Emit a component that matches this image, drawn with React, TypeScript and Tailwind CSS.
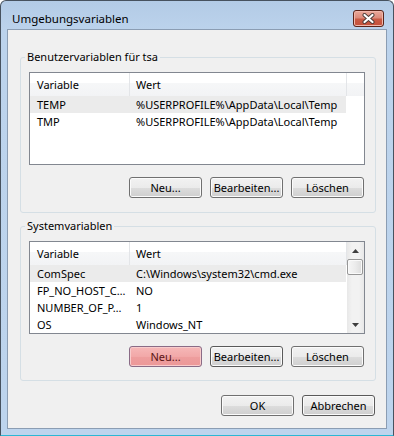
import React from "react";

type BtnKind = "normal" | "hot" | "focus";

function Btn({ label, kind = "normal" }: { label: string; kind?: BtnKind }) {
  const base =
    "w-[73px] h-[21px] rounded-[3px] border flex items-center justify-center text-[11px] leading-[16px] shrink-0 whitespace-nowrap";
  if (kind === "hot") {
    return (
      <div
        className={`${base} border-[#8a6b86] bg-[linear-gradient(to_bottom,#f6b8b8_0%,#f2a8a8_50%,#ee9e9e_50%,#ec9898_100%)] shadow-[inset_0_0_0_1px_#f8cccc] text-[#5a1414]`}
      >
        {label}
      </div>
    );
  }
  if (kind === "focus") {
    return (
      <div
        className={`${base} border-[#5a5a5a] bg-[linear-gradient(to_bottom,#f2f2f2_0%,#ebebeb_50%,#dddddd_50%,#cfcfcf_100%)] shadow-[inset_0_0_0_1px_#fbfbfb] text-black`}
      >
        {label}
      </div>
    );
  }
  return (
    <div
      className={`${base} border-[#707070] bg-[linear-gradient(to_bottom,#f2f2f2_0%,#ebebeb_50%,#dddddd_50%,#cfcfcf_100%)] shadow-[inset_0_0_0_1px_#fbfbfb] text-black`}
    >
      {label}
    </div>
  );
}

function CloseBtn() {
  return (
    <div className="mt-[9px] mr-[9px] w-[31px] h-[17px] rounded-[3px] border border-[#5a2419] bg-[linear-gradient(to_bottom,#eaa99b_0%,#dc8b7b_45%,#c95a44_55%,#c4503a_100%)] shadow-[inset_0_0_0_1px_#f0b7ab] flex items-center justify-center">
      <svg width="15" height="11" viewBox="0 0 15 11">
        <path d="M3.5 2 L11.5 9 M11.5 2 L3.5 9" stroke="#4a3a36" strokeWidth="4" strokeLinecap="round" fill="none" />
        <path d="M3.5 2 L11.5 9 M11.5 2 L3.5 9" stroke="#ffffff" strokeWidth="2.2" strokeLinecap="round" fill="none" />
      </svg>
    </div>
  );
}

function Arrow({ up }: { up?: boolean }) {
  return (
    <svg width="7" height="4" viewBox="0 0 7 4">
      {up ? <path d="M0 4 L3.5 0 L7 4 Z" fill="#3e3e3e" /> : <path d="M0 0 L7 0 L3.5 4 Z" fill="#3e3e3e" />}
    </svg>
  );
}

function Scrollbar() {
  return (
    <div className="w-[17px] shrink-0 flex flex-col bg-[linear-gradient(to_right,#e8e8e8_0%,#f2f2f2_30%,#f2f2f2_70%,#e8e8e8_100%)]">
      <div className="h-[17px] flex items-center justify-center shrink-0">
        <Arrow up />
      </div>
      <div className="mr-[1px] h-[16px] rounded-[2px] border border-[#979797] bg-[linear-gradient(to_right,#f6f6f6_0%,#ececec_50%,#dcdcdc_100%)] shadow-[inset_0_0_0_1px_#fafafa]" />
      <div className="flex-1" />
      <div className="h-[17px] flex items-center justify-center shrink-0">
        <Arrow />
      </div>
    </div>
  );
}

type Row = { name: string; value: string; hl?: boolean };

function ListView({ rows, scroll }: { rows: Row[]; scroll?: boolean }) {
  return (
    <div className="w-[336px] h-[93px] border border-[#828790] bg-white flex overflow-hidden">
      <div className="flex-1 min-w-0 flex flex-col">
        <div className="h-[23px] shrink-0 flex bg-[linear-gradient(to_bottom,#ffffff_0%,#ffffff_42%,#f6f7f8_45%,#f2f3f5_100%)]">
          <div className="w-[100px] shrink-0 border-r border-[#e3e5e8] pl-[7px] flex items-center">Variable</div>
          <div className="w-[217px] shrink-0 border-r border-[#e3e5e8] pl-[6px] flex items-center">Wert</div>
          <div className="flex-1" />
        </div>
        {rows.map((r) => (
          <div
            key={r.name}
            className={`h-[17px] shrink-0 w-[316px] flex items-center whitespace-nowrap ${r.hl ? "bg-[#ebebeb]" : ""}`}
          >
            <div className="w-[100px] shrink-0 pl-[7px] overflow-hidden">{r.name}</div>
            <div className="pl-[6px]">{r.value}</div>
          </div>
        ))}
      </div>
      {scroll && <Scrollbar />}
    </div>
  );
}

function Group({
  title,
  children,
  pb,
}: {
  title: string;
  children: React.ReactNode;
  pb: string;
}) {
  return (
    <fieldset className={`w-[356px] rounded-[3px] border border-[#d5dfe5] ${pb}`}>
      <legend className="ml-[4px] px-[2px] text-[11px] leading-[16px] text-black">{title}</legend>
      {children}
    </fieldset>
  );
}

export default function App() {
  const userRows: Row[] = [
    { name: "TEMP", value: "%USERPROFILE%\\AppData\\Local\\Temp", hl: true },
    { name: "TMP", value: "%USERPROFILE%\\AppData\\Local\\Temp" },
  ];
  const sysRows: Row[] = [
    { name: "ComSpec", value: "C:\\Windows\\system32\\cmd.exe", hl: true },
    { name: "FP_NO_HOST_C…", value: "NO" },
    { name: "NUMBER_OF_P…", value: "1" },
    { name: "OS", value: "Windows_NT" },
  ];
  return (
    <div className="w-[394px] h-[436px] bg-white font-['Noto_Sans','Open_Sans',sans-serif] text-[11px] leading-[16px] text-black">
      <div className="w-full h-full flex flex-col rounded-t-[6px] border border-[#47525f] border-b-[#2bb7d4] bg-[linear-gradient(to_bottom,#b3cbe6_0%,#bcd3ec_30px,#bdd4ed_100%)]">
        <div className="h-[28px] shrink-0 flex items-start justify-between">
          <div className="pl-[11px] pt-[10px] text-[11.5px]">Umgebungsvariablen</div>
          <CloseBtn />
        </div>
        <div className="flex-1 mx-[6px] mb-[6px] border border-[#8b9db3] bg-[#f0f0f0] flex flex-col pl-[12px] pr-[10px] pt-[19px]">
          <Group title="Benutzervariablen für tsa" pb="pb-[14px]">
            <div className="pl-[8px] pt-[7px] flex flex-col">
              <ListView rows={userRows} />
              <div className="mt-[12px] w-[335px] flex justify-end gap-[8px]">
                <Btn label="Neu..." />
                <Btn label="Bearbeiten..." />
                <Btn label="Löschen" />
              </div>
            </div>
          </Group>
          <div className="h-[5px] shrink-0" />
          <Group title="Systemvariablen" pb="pb-[13px]">
            <div className="pl-[8px] pt-[7px] flex flex-col">
              <ListView rows={sysRows} scroll />
              <div className="mt-[12px] w-[335px] flex justify-end gap-[8px]">
                <Btn label="Neu..." kind="hot" />
                <Btn label="Bearbeiten..." kind="focus" />
                <Btn label="Löschen" />
              </div>
            </div>
          </Group>
          <div className="mt-[14px] w-[355px] flex justify-end gap-[8px]">
            <Btn label="OK" />
            <Btn label="Abbrechen" kind="focus" />
          </div>
        </div>
      </div>
    </div>
  );
}
